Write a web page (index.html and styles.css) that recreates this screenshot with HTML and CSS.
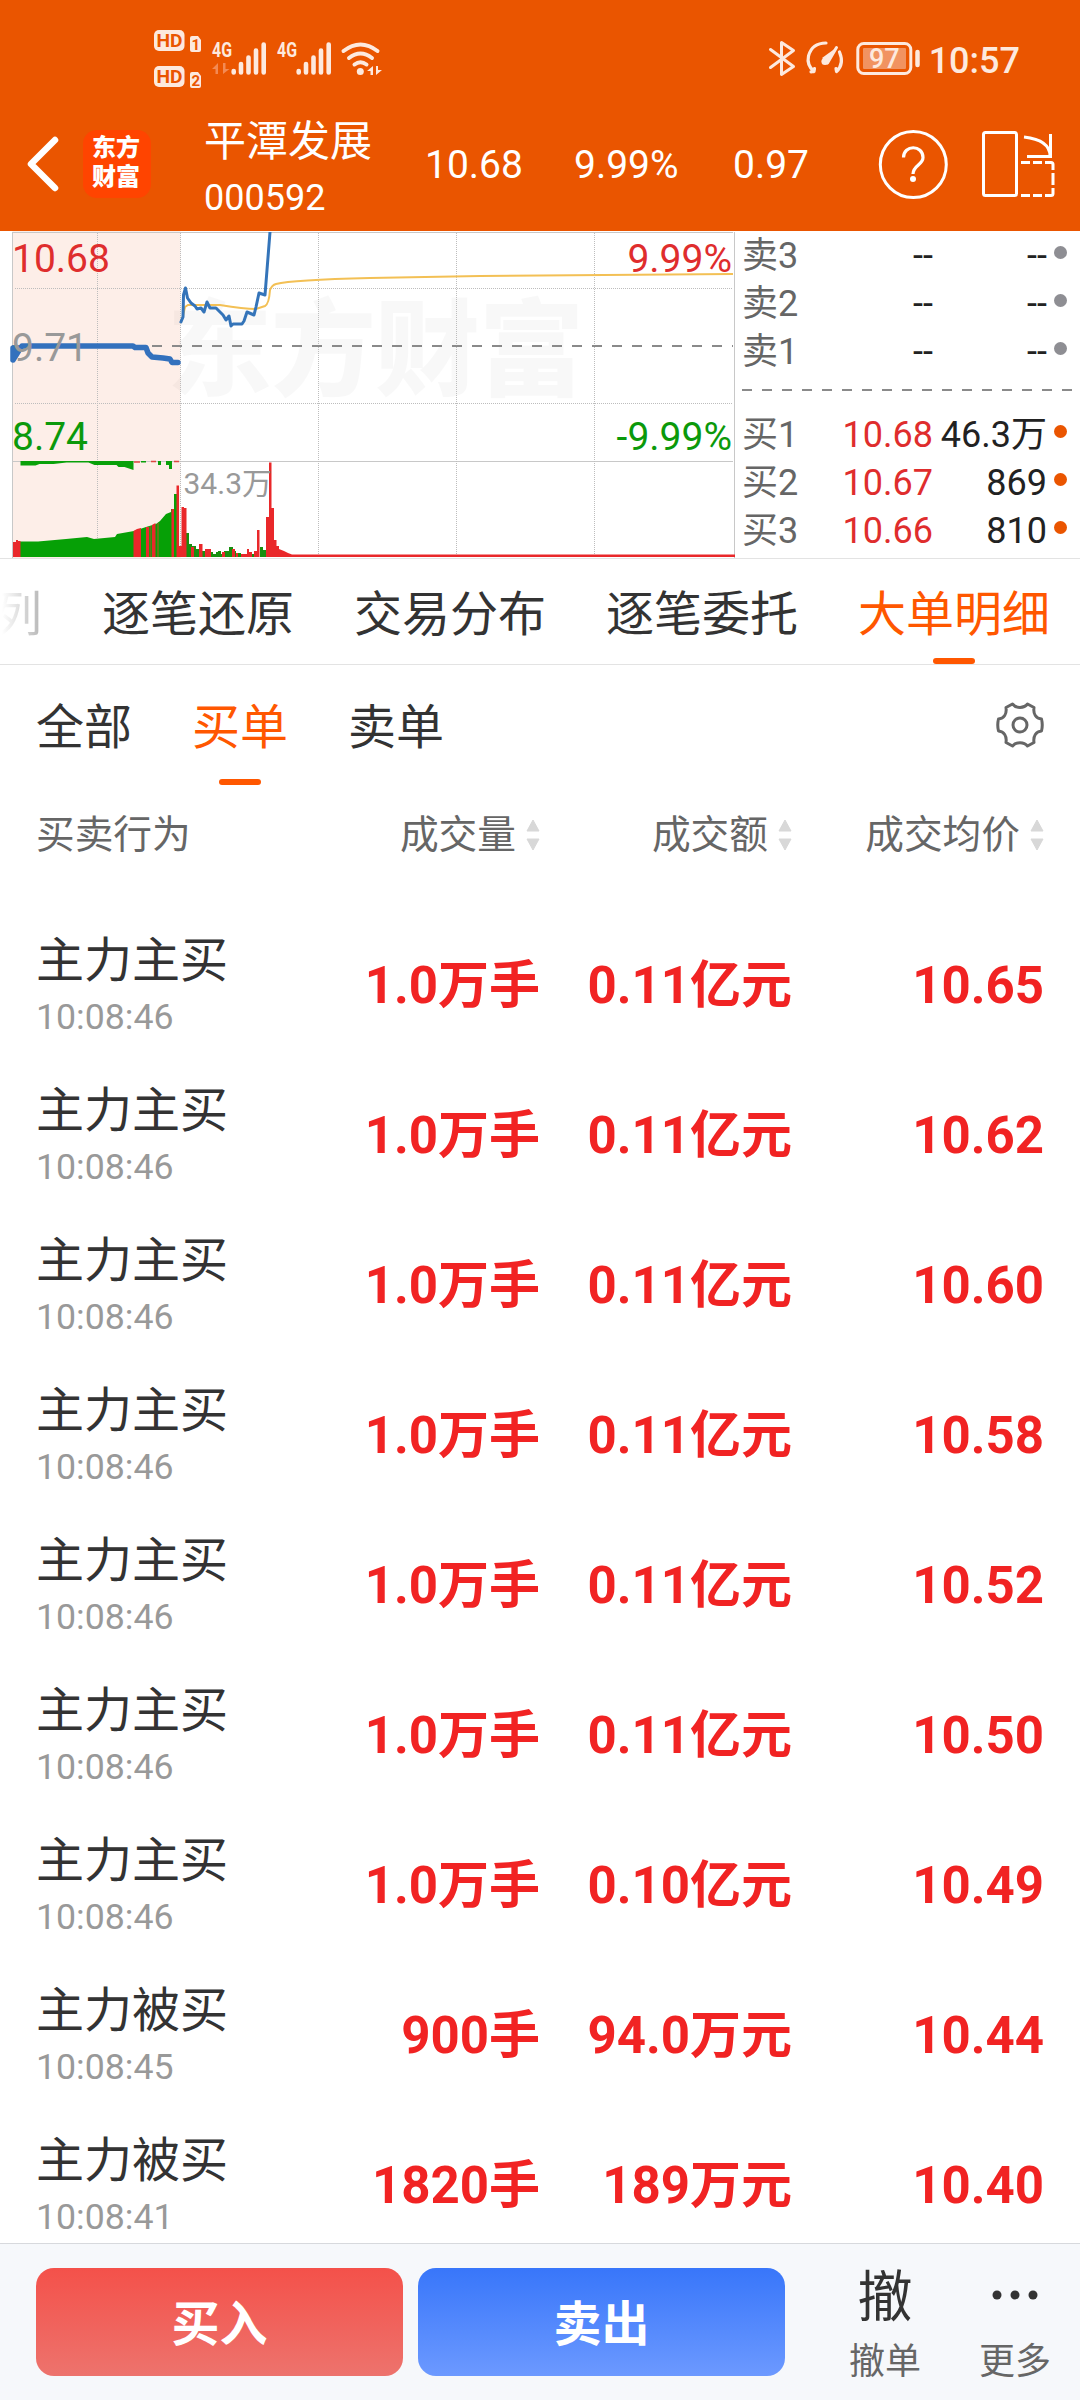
FILE: index.html
```html
<!DOCTYPE html>
<html lang="zh-CN">
<head>
<meta charset="utf-8">
<title>平潭发展 000592</title>
<link rel="stylesheet" href="styles.css">
</head>
<body>
<svg class="defs" width="0" height="0" aria-hidden="true">
  <symbol id="sort" viewBox="0 0 14 32"><path d="M7 1 13 12H1ZM7 31 13 20H1Z" fill="#d8d8d8" stroke="#d8d8d8" stroke-linejoin="round"/></symbol>
</svg>
<div class="app">
  <header class="top">
    <div class="status">
      <svg class="status-left" width="240" height="60" viewBox="148 25 240 60">
        <g fill="#fde9de">
          <rect x="154" y="30" width="30.500" height="21" rx="5"/>
          <rect x="154" y="66" width="30.500" height="21" rx="5"/>
          <path d="M192 36h6l3 4v10q0 2-2 2h-7q-2 0-2-2V38q0-2 2-2zM192 72h6l3 4v10q0 2-2 2h-7q-2 0-2-2V74q0-2 2-2z"/>
          <text class="net" x="212" y="56.500" textLength="20" lengthAdjust="spacingAndGlyphs">4G</text>
          <text class="net" x="277" y="56.500" textLength="20" lengthAdjust="spacingAndGlyphs">4G</text>
          <circle cx="360.300" cy="71.500" r="3.500"/>
          <path d="M373 66v9h-2.500v-4H367zM376 75v-9h2v4h4z"/>
        </g>
        <g class="knock" fill="#ea5500">
          <text x="156.500" y="47" textLength="26" lengthAdjust="spacingAndGlyphs">HD</text>
          <text x="156.500" y="83" textLength="26" lengthAdjust="spacingAndGlyphs">HD</text>
          <text class="sim" x="191.500" y="49.500">1</text>
          <text class="sim" x="191.500" y="85.500">2</text>
        </g>
        <path d="M218 63v11h-2.500v-5H212zM223 74V63h2.500v6h4z" fill="#f38a54"/>
        <g stroke="#fde9de" stroke-width="4.600" stroke-linecap="round" fill="none">
          <path d="M233.700 71v1.500M241 64v8.500M248.500 57.500v15M256 50.500v22M263.700 44.500v28M298.700 71v1.500M306 64v8.500M313.500 57.500v15M321 50.500v22M328.700 44.500v28"/>
          <path d="M343.500 51q17-13 34 0M349 58q11.500-9 23 0M354.500 64.500q6-4.500 12 0" stroke-width="4"/>
        </g>
      </svg>
      <div class="status-right">
        <svg width="154" height="40" viewBox="767 38 154 40" fill="none" stroke="#fde9de" stroke-linecap="round" stroke-linejoin="round">
          <path d="M770.500 49.500 793.500 66.500 781.500 74.500V42.500L793.500 50.500 770.500 67.500" stroke-width="3"/>
          <path d="M814 71.500Q806.500 65 808.500 56 812 43 826 43M839.500 52Q844.500 64 836.500 71.500M814 71.500l.5-3M814 71.500l-3 .3M836.500 71.500l-.5-3" stroke-width="3.200"/>
          <path d="M836.500 47.500 827.500 63" stroke-width="3"/>
          <path d="M836.500 47.500 822 58 828 63Z" fill="#fde9de" stroke="none"/>
          <circle cx="825" cy="61.500" r="3.600" fill="#fde9de" stroke="none"/>
          <rect x="857.800" y="43.500" width="53" height="30" rx="6" stroke-width="3"/>
          <rect x="863" y="48" width="43" height="21" rx="1" fill="#f19361" stroke="none"/>
          <path d="M917.500 52v13" stroke-width="4.500"/>
          <text class="batt" x="869" y="68">97</text>
        </svg>
        <span class="clock">10:57</span>
      </div>
    </div>
    <div class="nav">
      <svg class="back" width="34" height="58" viewBox="0 0 34 58"><path d="M30 5 6 29 30 53" fill="none" stroke="#fff" stroke-width="6.500" stroke-linecap="round" stroke-linejoin="round"/></svg>
      <div class="logo"><span>东方</span><span>财富</span></div>
      <div class="stock"><span class="name">平潭发展</span><span class="code">000592</span></div>
      <span class="q q1">10.68</span>
      <span class="q q2">9.99%</span>
      <span class="q q3">0.97</span>
      <svg class="nav-icons" width="180" height="72" viewBox="878 127 180 72" fill="none" stroke="#fff" stroke-width="3">
        <circle cx="913.300" cy="163.500" r="33"/>
        <path d="M903.500 156.500C903.500 143.500 923 143.500 923 156.500 923 164 913 164 913 173" stroke-width="3.200"/>
        <circle cx="913" cy="178" r="3" fill="#fff" stroke="none"/>
        <rect x="983.500" y="131.500" width="33" height="63" rx="2"/>
        <path d="M1024 136Q1050 139 1050 155M1050.500 133V155.500H1027"/>
        <path d="M1021 161.500h9m3 0h9m3 0h6q2 0 2 2v5.500m0 3v12m0 3v5.500q0 2-2 2h-6m-3 0h-9m-3 0h-9"/>
      </svg>
    </div>
  </header>

  <section class="quote">
    <svg class="chart" width="738" height="327" viewBox="0 231 738 327">
      <rect x="12.500" y="231" width="168" height="327" fill="#fdeee8"/>
      <text class="mark" x="167" y="387" textLength="417">东方财富</text>
      <g fill="none" stroke="#c8c8c8">
        <path d="M12.500 232.500H733M12.500 461.500H733M12.500 232V558M734.500 232V558"/>
        <path d="M97.500 233V557M180.500 233V557M318.500 233V557M456.500 233V557M594.500 233V557M15 288.500H733M15 403.500H733" stroke="#bdbdbd" stroke-dasharray="1 1"/>
      </g>
      <path d="M12 346H733" stroke="#8a8a8a" stroke-width="2" stroke-dasharray="10 10"/>
      <path d="M181 322 183 316 185 307 188 305H220C232 307 244 309 256 309L265 306Q269 304 270 290 272 285 276 284C292 280 330 279 370 278L480 276 733 274" fill="none" stroke="#f3c055" stroke-width="2"/>
      <path d="M180.500 323 183 317 183.500 295 185.500 288 187.500 298 191 303 195 306 197 309 201 308 204 312 207 302 210 308 216 308 223 315 226 320 229 316 231 326 233 324H242L244 321 247 312 254 315 256 307 259 293 265 295 267 270 270 232" fill="none" stroke="#3474b9" stroke-width="3" stroke-linejoin="round"/>
      <path d="M13 360 16 348 13 348V360L18 352 22 346H133L135 347.500H146L148 353 152 357 163 358 170 359 172 362.500H178" fill="none" stroke="#3371bd" stroke-width="5.500" stroke-linejoin="round" stroke-linecap="round"/>

      <path d="M20.500 461v4.500h15l4-1.500h14l13-1.500h22l6 2.500h22l2 2h6l9 3v-9ZM141 461v1.500h5v-1.500ZM158 461v4h3v-4ZM166 461v4h3v4h3v-8Z" fill="#09a009"/>
      <path d="M134 462h6M151 461.500h5M174 461.500h5" stroke="#df4540" stroke-width="1.500"/>
      <path d="M20 557V541.500H38L66 539 87 537 94 539 115 537 117 534 134 531 146 527 156 524 160 521 166 514 171 512V509H174V494H177V557Z" fill="#06a006"/>
      <path d="M186 557V533H189V544H192V546H196V549H201V551H205V550H211V552H213V554H216V552H218V551H221V554H224V551H229V547H233V551H236V553H241V554H247V550H249V552H252V554H256V557ZM260 557V547H263V550H266V557Z" fill="#178f0e"/>
      <path d="M13 557V542H16V540H18V541H20.500V557ZM133.500 557V531L137 529 141 528V557ZM146 557V527H149V557ZM152 557V525L155.500 523V557ZM171.500 557V509H174V557ZM176.500 557V485.500H179V546H181.500V507H184V508H186.500V557H176.500ZM191 557V547H194V557ZM199 557V544H202.500V557ZM205 557V549H211V557ZM222 557V552H225V557ZM232 557V549H235V557ZM236 557V553H238V557ZM241 557V554H247V549H249V552H252V557ZM254 557V551H257V530H259.500V557ZM266 557V517H269V462.500H271.500V508H274V540H276.500V546H279V549L284 551 288 553 292 554.500H735V557Z" fill="#e9282a"/>
      <path d="M150.500 557V526M158 557V523" stroke="#5c7a18" stroke-width="2"/>
      <g fill="#999" class="axis">
        <text x="12" y="361">9.71</text>
        <text x="12" y="272" fill="#df2d2d">10.68</text>
        <text x="12" y="450" fill="#0b990b">8.74</text>
        <text x="732" y="272" fill="#df2d2d" text-anchor="end">9.99%</text>
        <text x="732" y="450" fill="#0b990b" text-anchor="end">-9.99%</text>
        <text class="vol" x="183.500" y="494">34.3万</text>
      </g>
    </svg>
    <div class="book">
      <div class="level"><span>卖3</span><b>--</b><i>--</i><em></em></div>
      <div class="level"><span>卖2</span><b>--</b><i>--</i><em></em></div>
      <div class="level"><span>卖1</span><b>--</b><i>--</i><em></em></div>
      <div class="split"></div>
      <div class="level bid"><span>买1</span><b>10.68</b><i>46.3万</i><em></em></div>
      <div class="level bid"><span>买2</span><b>10.67</b><i>869</i><em></em></div>
      <div class="level bid"><span>买3</span><b>10.66</b><i>810</i><em></em></div>
    </div>
  </section>

  <nav class="tabs">
    <span class="faded">列</span><span>逐笔还原</span><span>交易分布</span><span>逐笔委托</span><span class="on">大单明细</span>
  </nav>
  <div class="filters">
    <span>全部</span><span class="on">买单</span><span>卖单</span>
    <svg class="gear" width="50" height="50" viewBox="-25 -25 50 50" fill="none" stroke="#666" stroke-width="3" stroke-linejoin="round"><circle r="7"/><path d="M-14-17.500-7.500-21C-4-16.500 4-16.500 7.500-21L14-17.500C13-11 16-6.500 21.500-6Q23 0 21.500 6C16 6.500 13 11 14 17.500L7.500 21C4 16.500-4 16.500-7.500 21L-14 17.500C-13 11-16 6.500-21.500 6Q-23 0-21.500-6C-16-6.500-13-11-14-17.500Z"/></svg>
  </div>
  <main class="list">
    <div class="row head"><span>买卖行为</span><span>成交量<svg width="14" height="32"><use href="#sort"/></svg></span><span>成交额<svg width="14" height="32"><use href="#sort"/></svg></span><span>成交均价<svg width="14" height="32"><use href="#sort"/></svg></span></div>
    <div class="row"><div class="who"><span>主力主买</span><time>10:08:46</time></div><b>1.0万手</b><b>0.11亿元</b><b>10.65</b></div>
    <div class="row"><div class="who"><span>主力主买</span><time>10:08:46</time></div><b>1.0万手</b><b>0.11亿元</b><b>10.62</b></div>
    <div class="row"><div class="who"><span>主力主买</span><time>10:08:46</time></div><b>1.0万手</b><b>0.11亿元</b><b>10.60</b></div>
    <div class="row"><div class="who"><span>主力主买</span><time>10:08:46</time></div><b>1.0万手</b><b>0.11亿元</b><b>10.58</b></div>
    <div class="row"><div class="who"><span>主力主买</span><time>10:08:46</time></div><b>1.0万手</b><b>0.11亿元</b><b>10.52</b></div>
    <div class="row"><div class="who"><span>主力主买</span><time>10:08:46</time></div><b>1.0万手</b><b>0.11亿元</b><b>10.50</b></div>
    <div class="row"><div class="who"><span>主力主买</span><time>10:08:46</time></div><b>1.0万手</b><b>0.10亿元</b><b>10.49</b></div>
    <div class="row"><div class="who"><span>主力被买</span><time>10:08:45</time></div><b>900手</b><b>94.0万元</b><b>10.44</b></div>
    <div class="row"><div class="who"><span>主力被买</span><time>10:08:41</time></div><b>1820手</b><b>189万元</b><b>10.40</b></div>
  </main>
  <footer class="actions">
    <button class="buy">买入</button>
    <button class="sell">卖出</button>
    <div class="tool cancel"><strong>撤</strong><span>撤单</span></div>
    <div class="tool more"><svg width="48" height="54" viewBox="-24 -27 48 54" fill="#333"><circle cx="-18" r="4.500"/><circle r="4.500"/><circle cx="18" r="4.500"/></svg><span>更多</span></div>
  </footer>
</div>
</body>
</html>
```
FILE: styles.css
```css
* { box-sizing: border-box; }
body { margin: 0; background: #fff; color: #333; font-family: Roboto, "Noto Sans CJK SC", sans-serif; }
.defs { display: block; height: 0; }
.app { width: 1080px; height: 2400px; display: flex; flex-direction: column; overflow: hidden; }
.app > * { flex: none; }

.top { height: 231px; background: #ea5500; color: #fff; }
.status { height: 96px; padding: 25px 60px 0 148px; display: flex; justify-content: space-between; align-items: flex-start; color: #fde9de; }
.status-left { overflow: visible; }
.net { font: 700 20px Roboto; }
.knock { font: 700 19px Roboto; }
.knock .sim { font-size: 15px; }
.status-right { display: flex; gap: 8px; padding-top: 13px; }
.batt { font: 500 27px Roboto; fill: #fde9de; stroke: none; }
.clock { font-size: 36px; font-weight: 500; line-height: 46px; }
.nav { height: 135px; display: flex; align-items: center; padding-left: 25px; }
.logo { width: 68px; height: 68px; margin: 1px 0 0 24px; border-radius: 14px; background: #ff4400; display: flex; flex-direction: column; justify-content: center; font-weight: 900; font-size: 24px; line-height: 29px; text-align: center; padding: 0 2px 2px 0; }
.stock { width: 221px; margin-left: 53px; padding-top: 9px; display: flex; flex-direction: column; }
.name { font-size: 42px; line-height: 60px; }
.code { font-size: 36px; line-height: 52px; }
.q { font-size: 39px; line-height: 48px; padding-top: 3px; }
.q1 { width: 149px; }
.q2 { width: 159px; }
.nav-icons { margin-left: auto; margin-right: 22px; }

.quote { height: 328px; display: flex; border-bottom: 1px solid #e3e3e3; }
.chart { display: block; }
.axis { font-size: 39px; }
.vol { font-size: 30px; }
.mark { font-size: 105px; font-weight: 900; fill: #000; fill-opacity: .028; }
.book { flex: 1; padding: 1px 4px 0 4px; }
.level { height: 48px; display: grid; grid-template-columns: 70px 121px 114px 20px; align-items: center; font-size: 36px; line-height: 48px; color: #666; }
.level b, .level i { font-weight: 400; font-style: normal; text-align: right; color: #222; }
.level.bid b { color: #df2d2d; }
.level em { width: 13px; height: 13px; border-radius: 50%; background: #8e8e93; justify-self: end; margin-bottom: 7px; }
.level.bid em { background: #ea5500; }
.split { height: 2px; margin: 13px 0 20px; background: repeating-linear-gradient(90deg, #8a8a8a 0 10px, transparent 10px 20px); }

.tabs { height: 106px; padding-right: 30px; display: flex; justify-content: flex-end; gap: 60px; border-bottom: 1px solid #e3e3e3; font-size: 48px; line-height: 112px; white-space: nowrap; }
.faded { background: linear-gradient(90deg, #fff 8px, #b5b5b5); background-clip: text; color: transparent; }
.tabs .on, .filters .on { color: #ff5700; position: relative; }
.on::after { content: ""; position: absolute; left: 50%; bottom: 0; width: 42px; height: 6px; margin-left: -21px; border-radius: 3px; background: #ff5700; }
.filters { height: 120px; padding: 0 35px 0 36px; display: flex; gap: 60px; font-size: 48px; line-height: 125px; }
.gear { margin: 35px 0 0 auto; }
.list { height: 1458px; overflow: hidden; }
.row { height: 150px; padding: 0 36px; display: grid; grid-template-columns: 252px 252px 252px 252px; align-items: center; }
.head { height: 99px; margin-bottom: 25px; font-size: 38.700px; color: #666; }
.head span { display: flex; justify-content: flex-end; align-items: center; gap: 10px; line-height: 48px; }
.head span:first-child { justify-content: flex-start; }
.row > b { font-size: 51px; line-height: 60px; padding-top: 4px; text-align: right; color: #f12323; white-space: nowrap; }
.who { display: flex; flex-direction: column; padding-top: 6px; }
.who span { font-size: 48px; line-height: 60px; }
.who time { font-size: 35.700px; line-height: 52px; color: #999; }

.actions { height: 157px; border-top: 1px solid #d7d9dd; background: #f6f8fb; display: flex; padding: 24px 28px 0 36px; }
.actions button { width: 367px; height: 108px; margin: 0 15px 0 0; padding: 0 0 4px; border: 0; border-radius: 18px; color: #fff; font: 700 48px Roboto, "Noto Sans CJK SC", sans-serif; }
.buy { background: linear-gradient(#f4514a, #ed736d); }
.sell { background: linear-gradient(#3876fa, #6c99ff); }
.tool { width: 74px; display: flex; flex-direction: column; align-items: center; font-size: 36px; color: #666; }
.tool strong { font-size: 55px; font-weight: 400; line-height: 58px; height: 54px; color: #333; }
.tool span { line-height: 40px; margin-top: 20px; white-space: nowrap; }
.cancel { margin-left: 48px; }
.more { margin-left: auto; }
```
